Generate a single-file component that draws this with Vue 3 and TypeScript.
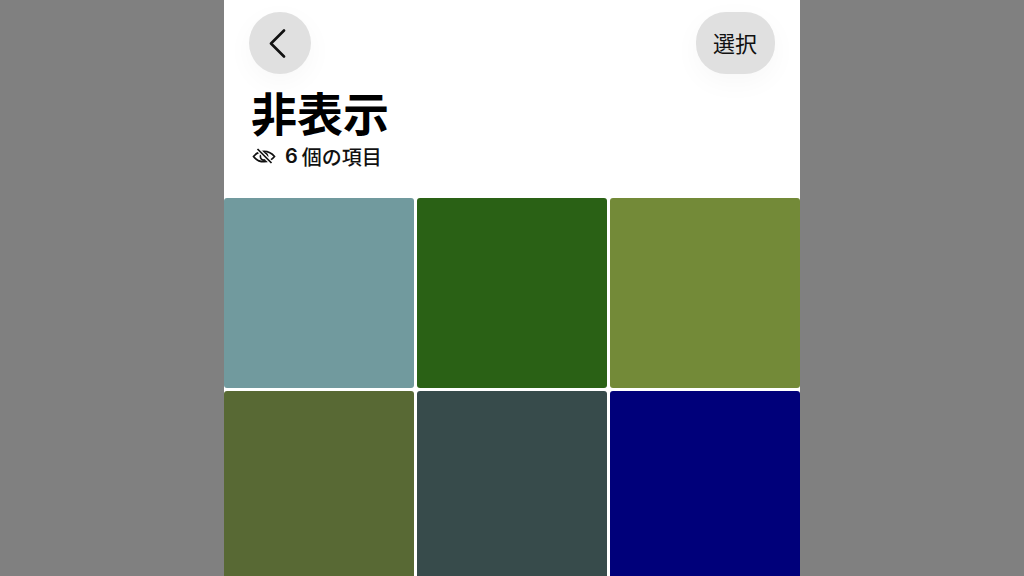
<script setup lang="ts">
const tiles: string[] = ['#719a9e', '#2a6115', '#738a38', '#586934', '#374b4b', '#00007a']
</script>

<template>
  <div class="stage">
    <main class="phone">
      <header class="top">
        <button class="round back" aria-label="戻る">
          <svg width="18" height="30" viewBox="0 0 18 30" fill="none">
            <path d="M15 2.500 2 15.500l13 13" stroke="#111" stroke-width="2.600" stroke-linecap="round" stroke-linejoin="round" />
          </svg>
        </button>
        <button class="round select">選択</button>
      </header>
      <section class="heading">
        <h1>非表示</h1>
        <div class="meta">
          <svg width="24" height="16" viewBox="0 0 24 16" fill="none" stroke="#111" stroke-width="1.700">
            <path d="M1.500 8.500c2.800-3.600 6-5.200 10.500-5.200s7.700 1.600 10.500 5.200c-2.800 3.600-6 5.200-10.500 5.200S4.300 12.100 1.500 8.500Z" />
            <circle cx="12" cy="8.500" r="3.600" />
            <path d="M5.500 1 19.500 15" stroke="#fff" stroke-width="4" />
            <path d="M5.500 1 19.500 15" stroke-width="1.700" />
          </svg>
          <span class="count">6</span>
          <span class="label">個の項目</span>
        </div>
      </section>
      <div class="grid">
        <div v-for="c in tiles" :key="c" class="tile" :style="{ backgroundColor: c }"></div>
      </div>
    </main>
  </div>
</template>

<style scoped>
.stage {
  width: 1024px;
  height: 576px;
  background: #808080;
  display: flex;
  justify-content: center;
  overflow: hidden;
  font-family: "Liberation Sans", "Noto Sans CJK JP", sans-serif;
}
.phone {
  width: 576px;
  height: 576px;
  background: #fff;
  overflow: hidden;
}
.top {
  display: flex;
  justify-content: space-between;
  padding: 12px 25px 0;
}
.round {
  height: 62px;
  border: 0;
  padding: 0;
  background: #e0e0e0;
  border-radius: 31px;
  display: flex;
  align-items: center;
  justify-content: center;
  box-shadow: 0 8px 28px rgba(0, 0, 0, 0.035);
  color: #111;
  font-family: inherit;
}
.back {
  width: 62px;
  padding-right: 4px;
}
.select {
  width: 79px;
  font-size: 22px;
  font-weight: 400;
  padding-bottom: 3px;
  padding-right: 1px;
  border-radius: 30px;
}
.heading {
  padding: 13px 27px 0 27px;
  height: 124px;
  box-sizing: border-box;
}
h1 {
  margin: 0;
  font-size: 46px;
  line-height: 56px;
  font-weight: 700;
  color: #000;
  letter-spacing: 0;
}
.meta {
  margin-top: 1px;
  margin-left: 1px;
  display: flex;
  align-items: center;
  height: 24px;
  font-size: 20px;
  font-weight: 500;
  color: #111;
}
.count {
  margin-left: 9px;
  margin-right: 4px;
  font-family: Inter, "Liberation Sans", sans-serif;
  font-weight: 600;
}
.grid {
  display: grid;
  grid-template-columns: repeat(3, 1fr);
  grid-auto-rows: 190px;
  gap: 3px;
}
.tile {
  border-radius: 3px;
}
</style>
